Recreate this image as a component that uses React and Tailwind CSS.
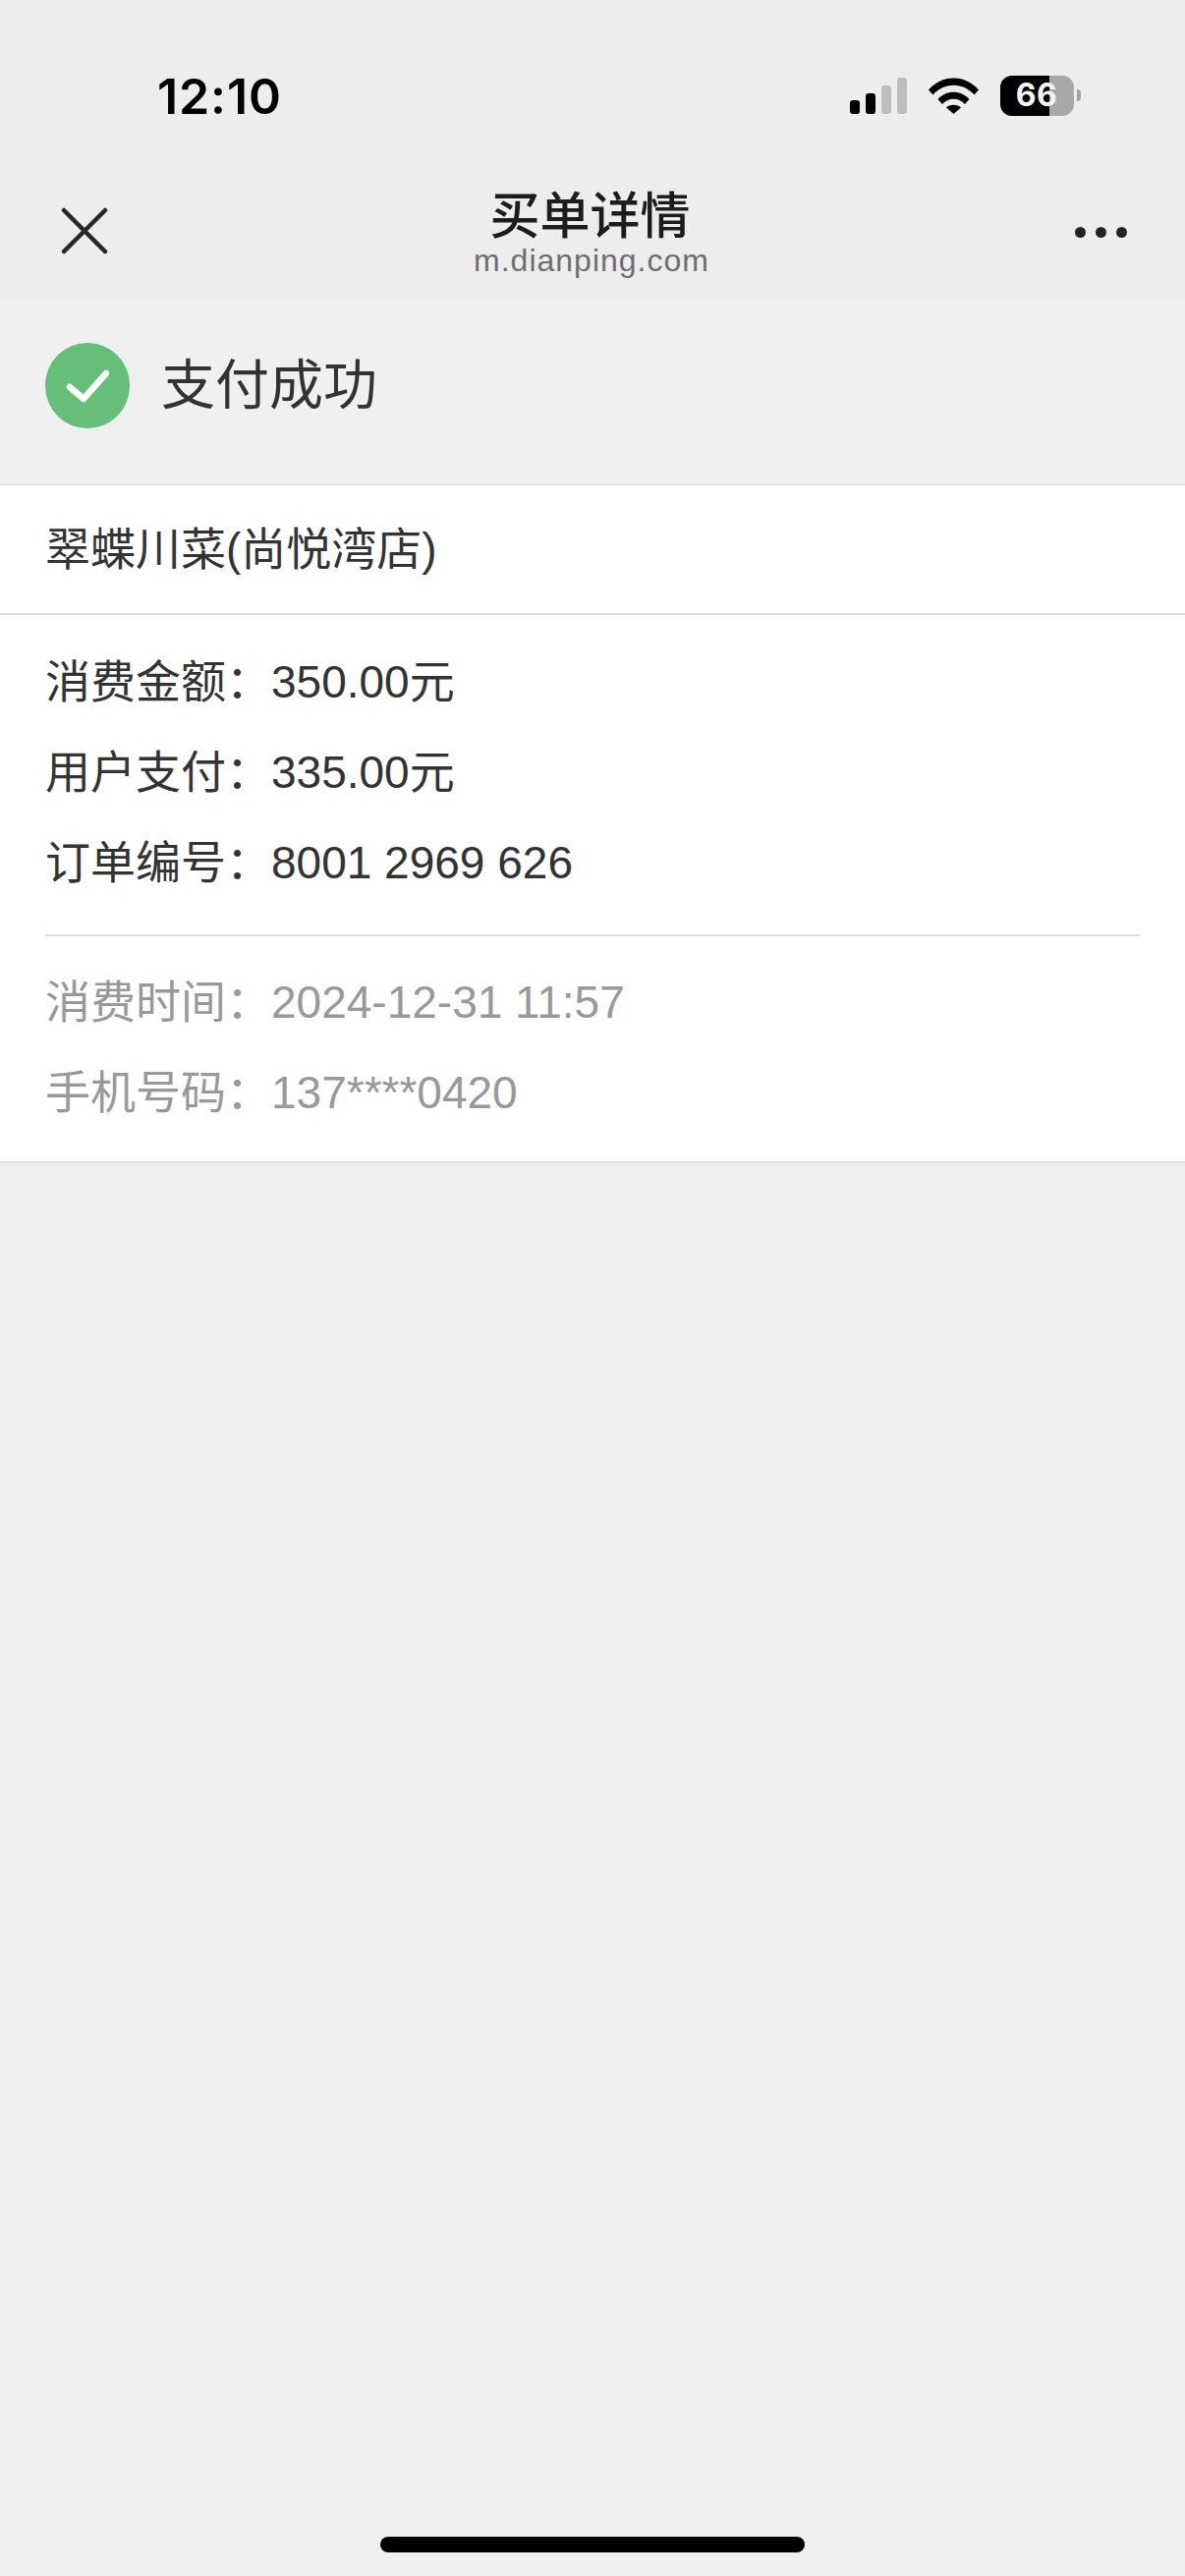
const FONT = "font-['Liberation_Sans','Noto_Sans_CJK_SC',sans-serif]";

function Signal() {
  return (
    <div className="flex items-end gap-[6px] h-[37px]">
      <div className="w-[10px] h-[14px] rounded-[3px] bg-black" />
      <div className="w-[10px] h-[21px] rounded-[3px] bg-black" />
      <div className="w-[10px] h-[29px] rounded-[3px] bg-[#bdbdbd]" />
      <div className="w-[10px] h-[37px] rounded-[3px] bg-[#bdbdbd]" />
    </div>
  );
}

function Wifi() {
  return (
    <svg width="51" height="37" viewBox="0 0 51 37" className="block">
      <path d="M0 12.5C6.5 5 15.5 0.5 25.5 0.5S44.5 5 51 12.5L46.5 17.5C41 11.5 33.8 7.8 25.5 7.8S10 11.500 4.500 17.500Z" fill="#000" />
      <path d="M9.500 22C13.500 17.500 19.300 14.800 25.500 14.800S37.500 17.500 41.500 22L37 27C34 23.800 30 21.800 25.500 21.800S17 23.800 14 27Z" fill="#000" />
      <path d="M18 30.500C20 28.800 22.600 27.800 25.500 27.800S31 28.800 33 30.500L25.500 37Z" fill="#000" />
    </svg>
  );
}

function Battery() {
  return (
    <div className="flex items-center gap-[3px]">
      <div className="relative w-[75px] h-[41px] rounded-[12px] overflow-hidden bg-[#a8a8a8]">
        <div className="w-[50px] h-full bg-black" />
        <span className="absolute inset-0 flex items-center justify-center pr-[1px] font-['Inter',sans-serif] text-[32px] font-bold tracking-[0.5px] text-[#f2f2f2]">66</span>
      </div>
      <div className="w-[4px] h-[12px] rounded-r-full bg-[#a0a0a0]" />
    </div>
  );
}

function Row({ label, value, gray }) {
  return (
    <div className={`flex h-[92px] pb-[2px] items-center text-[46px] ${gray ? 'text-[#999999]' : 'text-[#333333]'}`}>
      <span className="w-[230px] shrink-0">{label}：</span>
      <span>{value}</span>
    </div>
  );
}

export default function App() {
  return (
    <div className={`flex flex-col w-[1206px] h-[2622px] overflow-hidden bg-[#f0f0f0] ${FONT}`}>
      <header className="h-[304px] shrink-0 bg-[#ededed]">
        <div className="flex h-[194px] items-center justify-between pl-[160px] pr-[106px]">
          <span className="pt-[2px] font-['Inter',sans-serif] text-[50px] font-semibold tracking-[0.9px] text-black">12:10</span>
          <div className="flex items-center gap-[22px]">
            <Signal />
            <Wifi />
            <Battery />
          </div>
        </div>
        <div className="flex h-[110px] items-start justify-between pl-[62px] pr-[59px]">
          <svg width="48" height="48" viewBox="0 0 48 48" className="mt-[17px] block">
            <path d="M3 3L45 45M45 3L3 45" stroke="#262626" strokeWidth="4.500" strokeLinecap="round" />
          </svg>
          <div className="flex flex-col items-center">
            <span className="-mt-[1px] pr-[3px] text-[51px] leading-[55px] font-medium text-[#1c1c1c]">买单详情</span>
            <span className="text-[32px] leading-[34px] tracking-[1px] text-[#6e6e6e]">m.dianping.com</span>
          </div>
          <div className="mt-[37px] flex gap-[10px]">
            <div className="w-[11px] h-[11px] rounded-full bg-[#222222]" />
            <div className="w-[11px] h-[11px] rounded-full bg-[#222222]" />
            <div className="w-[11px] h-[11px] rounded-full bg-[#222222]" />
          </div>
        </div>
      </header>

      <div className="flex h-[188px] items-start gap-[32px] pl-[46px] pt-[45px]">
        <div className="flex w-[86px] h-[87px] items-center justify-center rounded-full bg-[#66bf78]">
          <svg width="44" height="34" viewBox="0 0 44 34" className="block">
            <path d="M4 18L18 30L41 4" fill="none" stroke="#ffffff" strokeWidth="6.500" strokeLinecap="round" strokeLinejoin="round" />
          </svg>
        </div>
        <span className="text-[55px] leading-[86px] text-[#333333]">支付成功</span>
      </div>

      <section className="bg-white border-y-2 border-[#e2e2e2]">
        <div className="flex h-[132px] items-center pl-[46px] text-[46px] text-[#333333] border-b-2 border-[#d9d9d9]">
          翠蝶川菜(尚悦湾店)
        </div>
        <div className="px-[46px] pt-[23px] pb-[23px]">
          <div className="pb-[26px] border-b-2 border-[#dedede]">
            <Row label="消费金额" value="350.00元" />
            <Row label="用户支付" value="335.00元" />
            <Row label="订单编号" value="8001 2969 626" />
          </div>
          <div className="pt-[22px]">
            <Row gray label="消费时间" value="2024-12-31 11:57" />
            <Row gray label="手机号码" value="137****0420" />
          </div>
        </div>
      </section>

      <div className="mt-auto mb-[24px] self-center w-[432px] h-[16px] rounded-full bg-black" />
    </div>
  );
}
